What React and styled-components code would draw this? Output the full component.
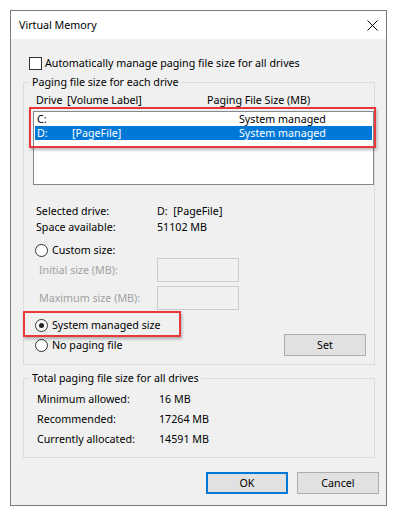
import React from 'react';
import styled, { createGlobalStyle } from 'styled-components';

const GlobalStyle = createGlobalStyle`
  body {
    margin: 0;
    background: #fff;
    font-family: "Noto Sans", "Open Sans", sans-serif;
    font-size: 10.7px;
    color: #000;
  }
`;

const Window = styled.div`
  box-sizing: border-box;
  width: 377px;
  height: 496px;
  margin: 10px 0 0 10px;
  border: 1px solid #7a7a7a;
  display: flex;
  flex-direction: column;
  background: #f0f0f0;
`;

const TitleBar = styled.div`
  height: 28px;
  flex: none;
  background: #fff;
  display: flex;
  align-items: center;
  justify-content: space-between;
  padding: 0 8px;
`;

const Body = styled.div`
  flex: 1;
  padding: 16px 7px 0 12px;
`;

const CheckRow = styled.label`
  display: flex;
  align-items: center;
  gap: 3px;
  height: 16px;
  padding-left: 6px;
`;

const CheckBox = styled.span`
  box-sizing: border-box;
  width: 13px;
  height: 13px;
  border: 1px solid #333;
  background: #fff;
`;

const Group = styled.fieldset`
  box-sizing: border-box;
  width: 352px;
  min-width: 0;
  margin: ${(p) => p.$top}px 0 0;
  padding: 0 0 8px;
  border: 1px solid #dcdcdc;
`;

const Legend = styled.legend`
  margin-left: 6px;
  padding: 0 2px;
  line-height: 14px;
`;

const ColumnHeader = styled.div`
  display: grid;
  grid-template-columns: 31px 140px auto;
  margin: 4px 0 0 12px;
  line-height: 14px;
`;

const ListWrap = styled.div`
  position: relative;
  width: 341px;
  margin: 4px 0 0 9px;
`;

const ListBox = styled.div`
  box-sizing: border-box;
  height: 74px;
  border: 1px solid #828790;
  background: #fff;
  padding: 0 1px;
`;

const ListRow = styled.div`
  display: grid;
  grid-template-columns: 35px 167px auto;
  height: 14px;
  line-height: 14px;
  padding-left: 2px;
  background: ${(p) => (p.$selected ? '#0078d7' : 'transparent')};
  color: ${(p) => (p.$selected ? '#fff' : '#000')};
`;

const RedMark = styled.div`
  position: absolute;
  left: ${(p) => p.$box[0]}px;
  top: ${(p) => p.$box[1]}px;
  width: ${(p) => p.$box[2]}px;
  height: ${(p) => p.$box[3]}px;
  box-sizing: border-box;
  border: 2px solid #e8383a;
  box-shadow: 1px 2px 3px rgba(0, 0, 0, 0.28);
  pointer-events: none;
`;

const InfoGrid = styled.div`
  display: grid;
  grid-template-columns: ${(p) => p.$label}px auto;
  grid-auto-rows: ${(p) => p.$row}px;
  align-items: center;
  margin: ${(p) => p.$top}px 0 0 ${(p) => p.$left}px;
`;

const RadioRow = styled.div`
  position: relative;
  display: flex;
  align-items: center;
  gap: 4px;
  height: 16px;
  padding-left: 11px;
  margin-top: ${(p) => p.$top}px;
`;

const Radio = styled.span`
  box-sizing: border-box;
  width: 13px;
  height: 13px;
  border-radius: 50%;
  border: 1px solid #333;
  background: #fff;
  display: flex;
  align-items: center;
  justify-content: center;
  &::after {
    content: '';
    display: ${(p) => (p.$checked ? 'block' : 'none')};
    width: 5px;
    height: 5px;
    border-radius: 50%;
    background: #222;
  }
`;

const SizeGrid = styled.div`
  display: grid;
  grid-template-columns: 118px 82px;
  grid-auto-rows: 24px;
  row-gap: 4px;
  align-items: center;
  margin-left: 15px;
  color: #a0a0a0;
`;

const SizeInput = styled.span`
  box-sizing: border-box;
  height: 24px;
  border: 1px solid #cccccc;
  background: #f0f0f0;
`;

const LastRow = styled.div`
  display: flex;
  align-items: center;
  justify-content: space-between;
  height: 22px;
  margin-top: 1px;
  padding: 0 8px 0 11px;
`;

const RadioLabel = styled.span`
  display: flex;
  align-items: center;
  gap: 4px;
`;

const Button = styled.button`
  box-sizing: border-box;
  width: 82px;
  height: 22px;
  padding: 0;
  font: inherit;
  color: #000;
  background: #e1e1e1;
  border: 1px solid ${(p) => (p.$default ? '#0078d7' : '#adadad')};
  box-shadow: ${(p) => (p.$default ? 'inset 0 0 0 1px #0078d7' : 'none')};
`;

const ButtonRow = styled.div`
  display: flex;
  justify-content: flex-end;
  gap: 9px;
  margin-top: 14px;
`;

const CloseIcon = () => (
  <svg width="11" height="11" viewBox="0 0 11 11">
    <path d="M0.5 0.5 L10.5 10.5 M10.5 0.5 L0.5 10.5" stroke="#000" strokeWidth="1" />
  </svg>
);

const drives = [
  { id: 'c', letter: 'C:', label: '', size: 'System managed' },
  { id: 'd', letter: 'D:', label: '[PageFile]', size: 'System managed', selected: true },
];

const totals = [
  ['Minimum allowed:', '16 MB'],
  ['Recommended:', '17264 MB'],
  ['Currently allocated:', '14591 MB'],
];

export default function App() {
  return (
    <>
      <GlobalStyle />
      <Window>
        <TitleBar>
          <span>Virtual Memory</span>
          <CloseIcon />
        </TitleBar>
        <Body>
          <CheckRow>
            <CheckBox />
            Automatically manage paging file size for all drives
          </CheckRow>

          <Group $top={4}>
            <Legend>Paging file size for each drive</Legend>
            <ColumnHeader>
              <span>Drive</span>
              <span>[Volume Label]</span>
              <span>Paging File Size (MB)</span>
            </ColumnHeader>
            <ListWrap>
              <ListBox>
                {drives.map((d) => (
                  <ListRow key={d.id} $selected={d.selected}>
                    <span>{d.letter}</span>
                    <span>{d.label}</span>
                    <span>{d.size}</span>
                  </ListRow>
                ))}
              </ListBox>
              <RedMark $box={[-4, -4, 347, 41]} />
            </ListWrap>

            <InfoGrid $label={121} $row={16} $top={18} $left={12}>
              <span>Selected drive:</span>
              <span>D:&nbsp; [PageFile]</span>
              <span>Space available:</span>
              <span>51102 MB</span>
            </InfoGrid>

            <RadioRow $top={7}>
              <Radio />
              Custom size:
            </RadioRow>
            <SizeGrid>
              <span>Initial size (MB):</span>
              <SizeInput />
              <span>Maximum size (MB):</span>
              <SizeInput />
            </SizeGrid>

            <RadioRow $top={7}>
              <Radio $checked />
              System managed size
              <RedMark $box={[-1, -6, 158, 26]} />
            </RadioRow>
            <LastRow>
              <RadioLabel>
                <Radio />
                No paging file
              </RadioLabel>
              <Button>Set</Button>
            </LastRow>
          </Group>

          <Group $top={6}>
            <Legend>Total paging file size for all drives</Legend>
            <InfoGrid $label={122} $row={20} $top={4} $left={13}>
              {totals.map(([k, v]) => (
                <React.Fragment key={k}>
                  <span>{k}</span>
                  <span>{v}</span>
                </React.Fragment>
              ))}
            </InfoGrid>
          </Group>

          <ButtonRow>
            <Button $default>OK</Button>
            <Button>Cancel</Button>
          </ButtonRow>
        </Body>
      </Window>
    </>
  );
}
